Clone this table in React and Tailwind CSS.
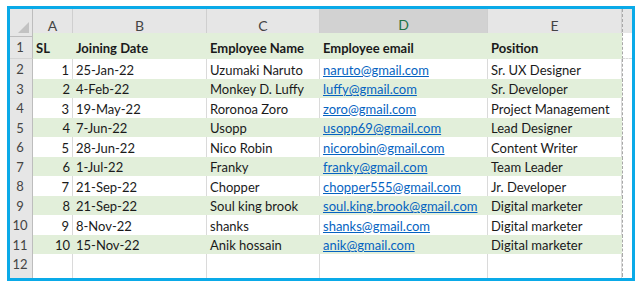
import React from 'react'

const ROWS = [
  { sl: 1, date: '25-Jan-22', name: 'Uzumaki Naruto', email: 'naruto@gmail.com', pos: 'Sr. UX Designer' },
  { sl: 2, date: '4-Feb-22', name: 'Monkey D. Luffy', email: 'luffy@gmail.com', pos: 'Sr. Developer' },
  { sl: 3, date: '19-May-22', name: 'Roronoa Zoro', email: 'zoro@gmail.com', pos: 'Project Management' },
  { sl: 4, date: '7-Jun-22', name: 'Usopp', email: 'usopp69@gmail.com', pos: 'Lead Designer' },
  { sl: 5, date: '28-Jun-22', name: 'Nico Robin', email: 'nicorobin@gmail.com', pos: 'Content Writer' },
  { sl: 6, date: '1-Jul-22', name: 'Franky', email: 'franky@gmail.com', pos: 'Team Leader' },
  { sl: 7, date: '21-Sep-22', name: 'Chopper', email: 'chopper555@gmail.com', pos: 'Jr. Developer' },
  { sl: 8, date: '21-Sep-22', name: 'Soul king brook', email: 'soul.king.brook@gmail.com', pos: 'Digital marketer' },
  { sl: 9, date: '8-Nov-22', name: 'shanks', email: 'shanks@gmail.com', pos: 'Digital marketer' },
  { sl: 10, date: '15-Nov-22', name: 'Anik hossain', email: 'anik@gmail.com', pos: 'Digital marketer' }
]

const GRID = 'grid grid-cols-[23px_40px_134px_113px_168px_134px_10px]'

function RowNum({ n }) {
  return (
    <div className="flex items-center justify-center bg-[#e6e6e6] border-r border-b border-r-[#bdbdbd] border-b-[#d4d4d4] text-[#444] pr-[2px] pt-[1px]">
      {n}
    </div>
  )
}

function Cell({ green, children, className = '' }) {
  return (
    <div
      className={[
        'flex items-center whitespace-nowrap overflow-visible px-[3px] pt-[1px]',
        green ? 'bg-[#e2efda]' : 'bg-white border-r border-[#dadada]',
        className
      ].join(' ')}
    >
      {children}
    </div>
  )
}

function Tail({ last }) {
  return (
    <div
      className={[
        'bg-white border-l border-dashed border-l-[#a8a8a8]',
        last ? '' : 'border-b border-b-[#dadada]'
      ].join(' ')}
    />
  )
}

export default function App() {
  return (
    <div className="w-[642px] h-[288px] bg-white pl-[7px] pt-[6px]">
      <div
        className="w-[628px] h-[275px] border-[3px] border-[#0aaae8] overflow-hidden text-[13px] text-[#1a1a1a]"
        style={{ fontFamily: 'Lato, "Noto Sans", sans-serif' }}
      >
        {/* column headers */}
        <div className={`${GRID} h-[24px] bg-[#e6e6e6] text-[#444] text-[14px]`}>
          <div className="relative border-r border-b border-[#bdbdbd]">
            <svg className="absolute right-[3px] bottom-[3px]" width="11" height="11" viewBox="0 0 11 11">
              <polygon points="11,0 11,11 0,11" fill="#c2c2c2" />
            </svg>
          </div>
          {['A', 'B', 'C'].map((l) => (
            <div key={l} className="flex items-center justify-center pt-[5px] border-r border-r-[#cfcfcf] border-b border-b-[#a8a8a8]">
              {l}
            </div>
          ))}
          <div className="flex items-center justify-center pt-[5px] bg-[#d2d2d2] text-[#217346] border-r border-r-[#cfcfcf] border-b-2 border-b-[#217346]">
            D
          </div>
          <div className="flex items-center justify-center pt-[5px] border-r border-r-[#cfcfcf] border-b border-b-[#a8a8a8]">
            E
          </div>
          <div className="border-l border-dashed border-l-[#a8a8a8] border-b border-b-[#a8a8a8]" />
        </div>

        {/* header row */}
        <div className={`${GRID} h-[26px] font-bold`}>
          <div className="flex items-end justify-center pb-[1px] bg-[#e6e6e6] border-r border-b border-r-[#bdbdbd] border-b-[#d4d4d4] text-[#444] font-normal pr-[2px]">
            1
          </div>
          <Cell green className="items-end pb-[1px]">SL</Cell>
          <Cell green className="items-end pb-[1px]">Joining Date</Cell>
          <Cell green className="items-end pb-[1px]">Employee Name</Cell>
          <Cell green className="items-end pb-[1px]">Employee email</Cell>
          <Cell green className="items-end pb-[1px]">Position</Cell>
          <Tail />
        </div>

        {ROWS.map((r, i) => {
          const green = i % 2 === 1
          return (
            <div key={r.sl} className={`${GRID} h-[19.5px]`}>
              <RowNum n={i + 2} />
              <Cell green={green} className="justify-end">{r.sl}</Cell>
              <Cell green={green}>{r.date}</Cell>
              <Cell green={green}>{r.name}</Cell>
              <Cell green={green}>
                <span className="text-[#0563c1] underline underline-offset-1">{r.email}</span>
              </Cell>
              <Cell green={green}>{r.pos}</Cell>
              <Tail />
            </div>
          )
        })}

        <div className={`${GRID} h-[20px]`}>
          <RowNum n={12} />
          <Cell className="border-b border-b-[#dadada]" />
          <Cell className="border-b border-b-[#dadada]" />
          <Cell className="border-b border-b-[#dadada]" />
          <Cell className="border-b border-b-[#dadada]" />
          <Cell className="border-b border-b-[#dadada]" />
          <Tail />
        </div>
        <div className={`${GRID} h-[20px]`}>
          <div className="bg-[#e6e6e6] border-r border-r-[#bdbdbd]" />
          <Cell />
          <Cell />
          <Cell />
          <Cell />
          <Cell />
          <Tail last />
        </div>
      </div>
    </div>
  )
}
